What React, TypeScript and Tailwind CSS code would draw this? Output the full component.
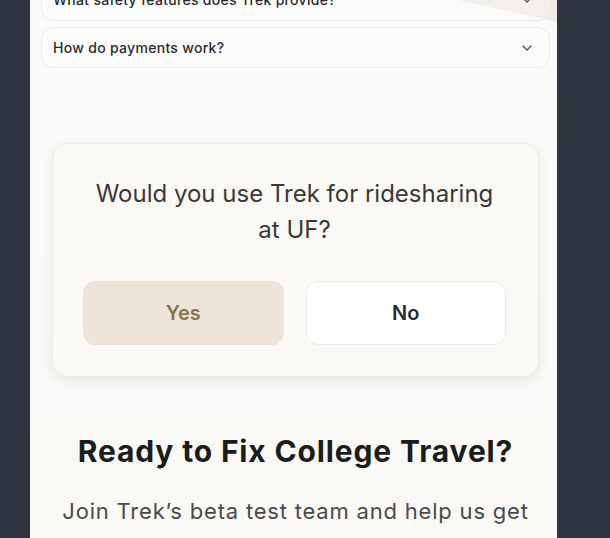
import { ChevronDown } from "lucide-react";

const FaqItem = ({ q, className = "" }: { q: string; className?: string }) => {
  return (
    <div
      className={`flex h-[41px] items-center justify-between rounded-xl border border-[#ebebeb] bg-white/25 pl-[11px] pr-[14px] ${className}`}
    >
      <span className="text-[14px] font-medium tracking-[0.3px] text-[#2b2b2b]">{q}</span>
      <ChevronDown className="h-4 w-4 text-[#555]" strokeWidth={2} />
    </div>
  );
};

export default function App() {
  return (
    <div className="min-h-[538px] w-full overflow-hidden bg-[#2f3441] font-['Inter',sans-serif]">
      <div className="ml-[30px] h-[538px] w-[527px] overflow-hidden bg-gradient-to-b from-[#fafafa] to-[#faf9f6]">
        <div className="relative -mt-[22px] pl-[4px]">
          <svg
            className="absolute right-0 top-0 h-[60px] w-[120px]"
            viewBox="0 0 120 60"
          >
            <polygon points="21,22 120,22 120,44" fill="#efebe4" />
          </svg>
          <div className="relative flex flex-col gap-[6px] px-[7px]">
            <FaqItem q="What safety features does Trek provide?" className="h-[43px]" />
            <FaqItem q="How do payments work?" />
          </div>

          <div className="px-[18px] pt-[75px]">
            <div className="rounded-2xl border border-[#efece7] bg-[#faf9f6] pb-[31px] pl-[30px] pr-[32px] pt-8 shadow-[0_4px_12px_rgba(0,0,0,0.08)]">
              <h2 className="text-center text-[24px] leading-[36px] text-[#3b3835]">
                Would you use Trek for ridesharing
                <br />
                at UF?
              </h2>
              <div className="mt-[33px] flex gap-[22px]">
                <button className="h-16 flex-1 rounded-xl border border-[#ece3d6] bg-[#ede5d9] text-[20px] font-semibold text-[#8a7350]">
                  Yes
                </button>
                <button className="h-16 flex-1 rounded-xl border border-[#ebebeb] bg-white text-[20px] font-semibold text-[#2b2b2b]">
                  No
                </button>
              </div>
            </div>
          </div>

          <div className="pt-[56px] text-center">
            <h2 className="text-[30px] font-bold leading-[36px] tracking-[0.85px] text-[#1c1c1c]">
              Ready to Fix College Travel?
            </h2>
            <p className="mt-[26px] text-[22px] leading-[32px] tracking-[0.8px] text-[#4a4a4a]">
              Join Trek’s beta test team and help us get
            </p>
          </div>
        </div>
      </div>
    </div>
  );
}
